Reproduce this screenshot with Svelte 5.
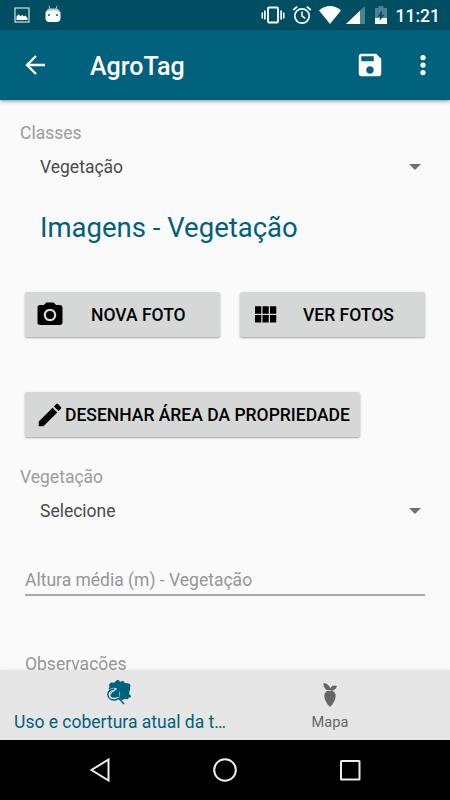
<script lang="ts">
    let title = "AgroTag";
    let clock = "11:21";
    let classe = "Vegetação";
    let vegetacao = "Selecione";
    let active = 0;
</script>

<main>
    <header class="status">
        <svg class="picture" width="16" height="16" viewBox="0 0 16 16">
            <rect x="1" y="1" width="14" height="14" fill="none" stroke="#c5d6dc" stroke-width="1.3" />
            <path d="M2.500 13V9.200L4.600 7.300l1.800 2 2-1.200 1.500 1.300 1.400-.9 2.200 2.400V13z" fill="#fff" />
        </svg>
        <svg class="robot" width="16" height="18" viewBox="0 0 16 18">
            <path d="M4 .8l1 3M12 .8l-1 3" stroke="#b5cbd2" stroke-width="1" />
            <path d="M1 7.5Q1.3 3.8 5 3.5h6q3.7.3 4 4z" fill="#b5cbd2" />
            <path d="M.5 7Q3 5.4 8 5.4T15.500 7v6.500Q15 17 11.500 17h-7Q1 17 .5 13.500z" fill="#fff" />
            <rect x="3" y="9" width="2" height="2" fill="#4b808f" />
            <rect x="11" y="9" width="2" height="2" fill="#4b808f" />
        </svg>
        <div class="tray">
            <svg width="24" height="20" viewBox="0 0 24 20" fill="#fff">
                <path d="M.5 7.500H2v6H.5zM3 5.500h1.700v9H3zM19.300 5.500H21v9h-1.700zM22 7.500h1.500v6H22z" />
                <rect x="7" y="2.500" width="10" height="15" rx="1" fill="none" stroke="#fff" stroke-width="1.800" />
            </svg>
            <svg class="alarm" width="20" height="20" viewBox="0 0 20 20" fill="none" stroke="#fff">
                <circle cx="10" cy="11" r="7.200" stroke-width="1.700" />
                <path d="M10 6.500V11l3.300 2.300" stroke-width="1.500" />
                <path d="M1.200 5l4-3.400M18.800 5l-4-3.400" stroke-width="1.800" />
            </svg>
            <svg class="wifi" width="22" height="18" viewBox="0 0 22 18">
                <path d="M0 4.500Q4.800 0 11 0t11 4.500L11 18z" fill="#fff" />
            </svg>
            <svg class="signal" width="19" height="18" viewBox="0 0 19 18">
                <path d="M0 18L19 0v18z" fill="#4d8391" />
                <path d="M0 18L14 4.700V18z" fill="#fff" />
            </svg>
            <svg class="battery" width="12" height="18" viewBox="0 0 12 18">
                <path d="M3.500 0h5v2H12v10H0V2h3.500z" fill="#4d8391" />
                <path d="M0 12h12v6H0z" fill="#fff" />
                <path d="M7.200 4L2.500 10.500h2.800L4.500 15 9.500 8.800H6.700z" fill="#004e62" />
            </svg>
            <span>{clock}</span>
        </div>
    </header>

    <nav class="toolbar">
        <svg class="back" width="20" height="20" viewBox="0 0 20 20" fill="none" stroke="#fff" stroke-width="2.400">
            <path d="M20 10H2M11 1l-9 9 9 9" />
        </svg>
        <h1>{title}</h1>
        <svg class="save" width="30" height="30" viewBox="0 0 24 24">
            <path d="M17 3H5c-1.110 0-2 .9-2 2v14c0 1.100.89 2 2 2h14c1.100 0 2-.9 2-2V7l-4-4zm-5 16c-1.660 0-3-1.340-3-3s1.340-3 3-3 3 1.340 3 3-1.340 3-3 3zm3-10H5V5h10v4z" fill="#fff" />
        </svg>
        <svg class="more" width="30" height="30" viewBox="0 0 24 24" fill="#fff">
            <circle cx="12" cy="6" r="2.100" />
            <circle cx="12" cy="12" r="2.100" />
            <circle cx="12" cy="18" r="2.100" />
        </svg>
    </nav>

    <section class="content">
        <div class="label">Classes</div>
        <div class="spinner">
            <span>{classe}</span>
            <svg width="12" height="6" viewBox="0 0 12 6"><path d="M0 0h12L6 6z" fill="#707070" /></svg>
        </div>

        <h2>Imagens - {classe}</h2>

        <div class="buttons">
            <button type="button" class="btn foto">
                <svg width="30" height="30" viewBox="0 0 24 24">
                    <circle cx="12" cy="12" r="3.200" />
                    <path d="M9 2L7.170 4H4c-1.100 0-2 .9-2 2v12c0 1.100.9 2 2 2h16c1.100 0 2-.9 2-2V6c0-1.100-.9-2-2-2h-3.170L15 2H9zm3 15c-2.760 0-5-2.240-5-5s2.240-5 5-5 5 2.240 5 5-2.240 5-5 5z" />
                </svg>
                <span>NOVA FOTO</span>
            </button>
            <button type="button" class="btn fotos">
                <svg width="30" height="30" viewBox="0 0 24 24">
                    <path d="M4 11h5V5H4v6zm0 7h5v-6H4v6zm6 0h5v-6h-5v6zm6 0h5v-6h-5v6zm-6-7h5V5h-5v6zm6-6v6h5V5h-5z" />
                </svg>
                <span>VER FOTOS</span>
            </button>
        </div>

        <button type="button" class="btn area">
            <svg width="30" height="30" viewBox="0 0 24 24">
                <path d="M3 17.250V21h3.750L17.810 9.940l-3.750-3.750L3 17.250zM20.710 7.040c.39-.39.39-1.020 0-1.410l-2.340-2.340c-.39-.39-1.020-.39-1.410 0l-1.830 1.830 3.750 3.750 1.830-1.830z" />
            </svg>
            <span>DESENHAR ÁREA DA PROPRIEDADE</span>
        </button>

        <div class="label second">Vegetação</div>
        <div class="spinner">
            <span>{vegetacao}</span>
            <svg width="12" height="6" viewBox="0 0 12 6"><path d="M0 0h12L6 6z" fill="#707070" /></svg>
        </div>

        <div class="field">Altura média (m) - Vegetação</div>
        <div class="field obs">Observações</div>
    </section>

    <nav class="tabs">
        <div class="tab" class:active={active === 0}>
            <svg width="26" height="26" viewBox="0 0 26 26">
                <path d="M3 5.500L5 3.500l3 .2L9.500 2.500 11 1l2 .3L14 3l2-1 2 .2.500 1.800 3 .2 2.500.8.500 2-.5 1.500.2 2-1 2.500v2l1.800 2-.5 1.500-2 .2-.5 1.800-2-.8-2 .6-1.500.6L6 18l-3-4 .5-3-1-1.500L3.500 8z" fill="#00617c" />
                <circle cx="7.700" cy="15.300" r="5" fill="#00617c" stroke="#e6e6e6" stroke-width="3" />
                <path d="M8.500 10Q2 10.500 1.800 15.500 2.500 21.500 9 21l4-1.500" fill="none" stroke="#00617c" stroke-width="1.400" />
                <path d="M6 14.500Q8 10 13.500 10v8l-3.500.500Q6.500 18 6 14.500z" fill="#00617c" />
                <path d="M4.500 15.500Q5.500 12 9 11.500" fill="none" stroke="#e6e6e6" stroke-width="1.200" />
                <path d="M12.500 19l5.500 6" stroke="#00617c" stroke-width="1.400" />
            </svg>
            <span>Uso e cobertura atual da t…</span>
        </div>
        <div class="tab" class:active={active === 1}>
            <svg width="16" height="26" viewBox="0 0 16 26" fill="#666">
                <path d="M8 8Q2 9.500 1.300 1 7 1.500 8.200 6.500 10 2.500 15 4 13.500 9 8.600 8.600z" />
                <path d="M8 9.200Q10 8 12 9.800q3 3 .8 8.200Q11 22.500 8 25 5 22.500 3.200 18 1 12.800 4 9.800 6 8 8 9.200z" />
            </svg>
            <span>Mapa</span>
        </div>
    </nav>

    <footer class="keys">
        <svg width="22" height="26" viewBox="0 0 22 26"><path d="M19.500 2.500v21L2.500 13z" /></svg>
        <svg width="26" height="26" viewBox="0 0 26 26"><circle cx="13" cy="13" r="10.800" /></svg>
        <svg width="22" height="26" viewBox="0 0 22 26"><rect x="2" y="4" width="18.500" height="18.500" rx=".5" /></svg>
    </footer>
</main>

<style>
    :global(body) {
        margin: 0;
        background: #fafafa;
    }

    main {
        width: 450px;
        height: 800px;
        display: flex;
        flex-direction: column;
        overflow: hidden;
        font-family: Roboto, sans-serif;
        font-size: 17.5px;
        line-height: 20px;
        background: #fafafa;
    }

    svg {
        display: block;
        flex: none;
    }

    .status {
        height: 30px;
        flex: none;
        display: flex;
        align-items: center;
        padding: 0 10px 0 14px;
        background: #004e62;
        color: #fff;
    }

    .robot {
        margin: -3px 0 0 15px;
    }

    .tray {
        display: flex;
        align-items: center;
        margin-left: auto;
        font-weight: 500;
    }

    .tray span { margin-top: 2px; }
    .alarm { margin-left: 7px; }
    .wifi { margin-left: 7px; }
    .signal { margin-left: 5px; }
    .battery { margin: 0 9px 0 10px; }

    .toolbar {
        height: 70px;
        flex: none;
        display: flex;
        align-items: center;
        padding: 0 12px 0 25px;
        background: #00617c;
        box-shadow: 0 1px 4px rgba(0, 0, 0, 0.45);
        z-index: 1;
    }

    h1 {
        flex: 1;
        margin: 4px 0 0 45px;
        color: #fff;
        font-size: 25px;
        font-weight: 500;
        line-height: 30px;
    }

    .more {
        margin-left: 23px;
    }

    .content {
        height: 570px;
        box-sizing: border-box;
        flex: none;
        padding: 23px 25px 0;
        overflow: hidden;
    }

    .label {
        margin-left: -5px;
        color: #9c9c9c;
    }

    .spinner {
        display: flex;
        align-items: center;
        justify-content: space-between;
        margin-top: 14px;
        padding: 0 4px 0 15px;
        color: #4a4a4a;
    }

    h2 {
        margin: 35px 0 48px 15px;
        color: #00617c;
        font-size: 27.5px;
        font-weight: 400;
        line-height: 32px;
    }

    .buttons {
        display: flex;
        gap: 20px;
    }

    .btn {
        height: 45px;
        display: flex;
        align-items: center;
        padding: 0 10px;
        border: none;
        border-radius: 2px;
        background: #d6d8d7;
        box-shadow: 0 1px 2px rgba(0, 0, 0, 0.35);
        color: #000;
        font: 500 17.5px/20px Roboto, sans-serif;
        white-space: nowrap;
    }

    .btn span {
        margin-top: 1px;
    }

    .foto { width: 195px; }
    .foto span { margin-left: 26px; }
    .fotos { width: 185px; }
    .fotos span { margin-left: 23px; }

    .area {
        width: 335px;
        margin-top: 55px;
    }

    .second {
        margin-top: 30px;
    }

    .field {
        margin-top: 49px;
        padding-bottom: 4px;
        border-bottom: 2px solid #a9a9a9;
        color: #969696;
    }

    .obs {
        margin-top: 58px;
    }

    .tabs {
        height: 70px;
        flex: none;
        display: flex;
        justify-content: center;
        background: #e6e6e6;
        box-shadow: 0 -1px 3px rgba(0, 0, 0, 0.06);
        z-index: 1;
    }

    .tab {
        width: 210px;
        display: flex;
        flex-direction: column;
        align-items: center;
        padding-top: 12px;
        color: #666;
        font-size: 14.6px;
    }

    .tab span {
        margin-top: 4px;
        white-space: nowrap;
    }

    .tab.active {
        padding-top: 9px;
        color: #00617c;
        font-size: 17.5px;
    }

    .tab.active svg {
        margin-left: -2px;
    }

    .tab.active span {
        margin-top: 7px;
    }

    .keys {
        height: 60px;
        flex: none;
        display: flex;
        align-items: center;
        justify-content: space-between;
        box-sizing: border-box;
        padding: 0 89px;
        background: #000;
        fill: none;
        stroke: #eee;
        stroke-width: 2;
    }
</style>
